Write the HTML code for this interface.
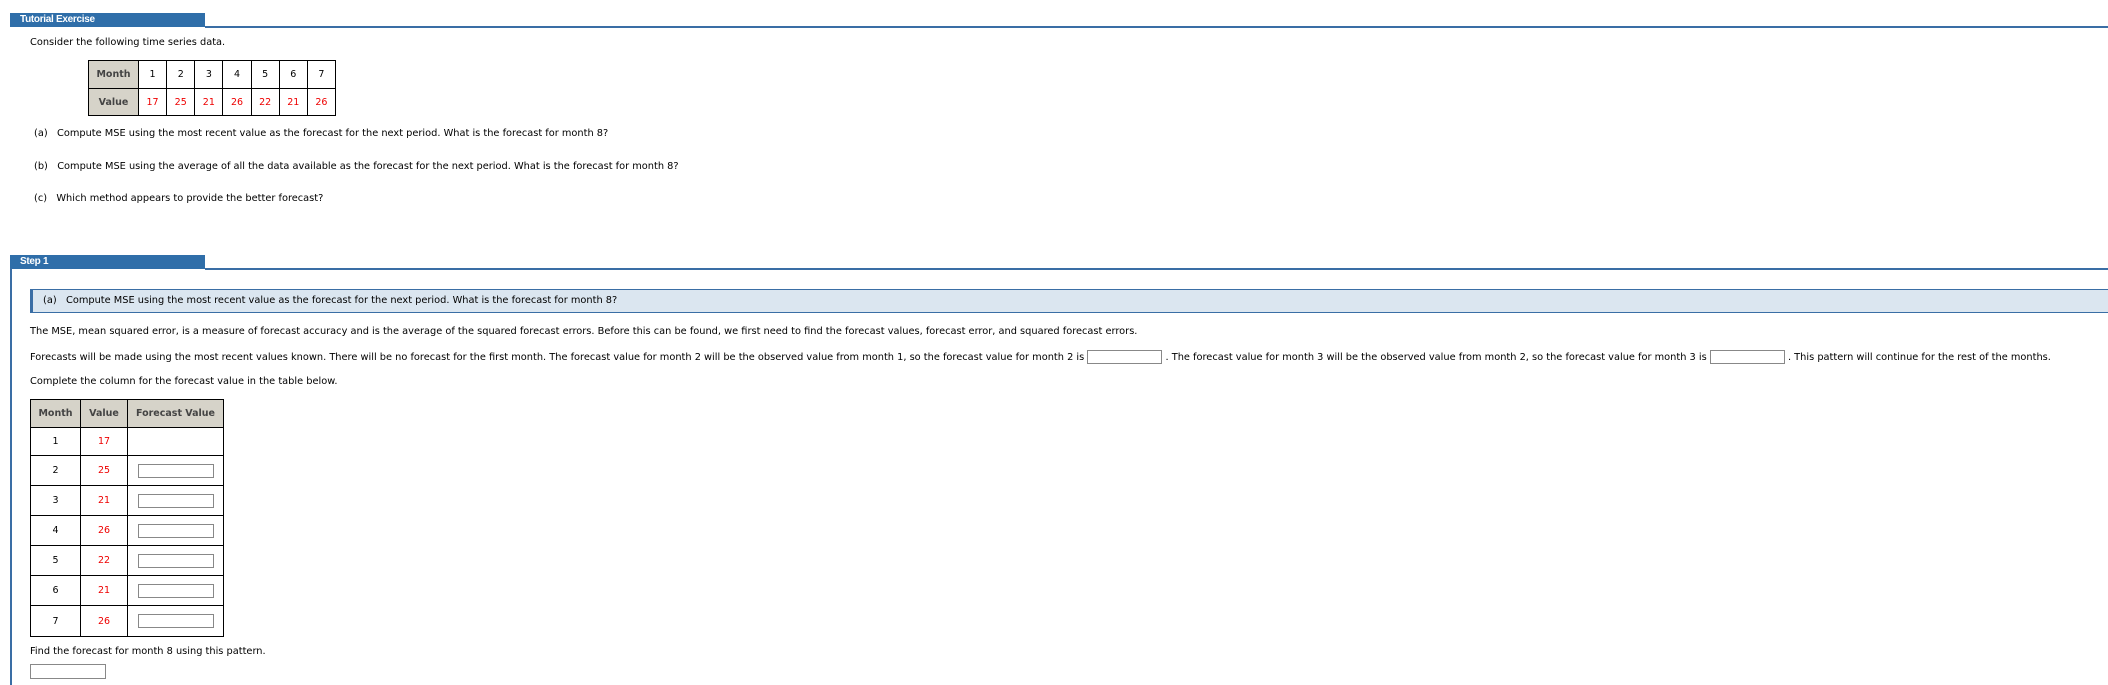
<!DOCTYPE html>
<html><head><meta charset="utf-8"><style>
*{margin:0;padding:0;box-sizing:border-box}
body{width:2108px;height:685px;background:#fff;position:relative;overflow:hidden;font-family:"DejaVu Sans","Liberation Sans",sans-serif;font-size:9.8px;color:#000}
.a{position:absolute;white-space:nowrap}
.bar{position:absolute;background:#2f6ea9;color:#fff;font-family:"Liberation Sans",sans-serif;font-weight:bold;font-size:10px;padding-left:10px;line-height:14px;letter-spacing:-0.3px}
.hl{position:absolute;height:2px;background:#3a6ea5}
table{position:absolute;border-collapse:collapse;font-size:9.5px}
td{border:1px solid #000;text-align:center;padding:0}
.h{background:#d6d3c9;color:#444;font-weight:bold}
.r{color:#e00}
.in{display:inline-block;border:1px solid #888;background:#fff;vertical-align:middle}
</style></head><body>
<div class="bar" style="left:10px;top:13px;width:195px;height:14px">Tutorial Exercise</div>
<div class="hl" style="left:205px;top:26px;width:1903px"></div>
<div class="a" style="left:30px;top:37px">Consider the following time series data.</div>
<table style="left:88px;top:60px;width:248px">
<tr style="height:28px"><td class="h" style="width:50px">Month</td><td>1</td><td>2</td><td>3</td><td>4</td><td>5</td><td>6</td><td>7</td></tr>
<tr style="height:27px"><td class="h">Value</td><td class="r">17</td><td class="r">25</td><td class="r">21</td><td class="r">26</td><td class="r">22</td><td class="r">21</td><td class="r">26</td></tr>
</table>
<div class="a" style="left:34px;top:128px">(a)&nbsp;&nbsp; Compute MSE using the most recent value as the forecast for the next period. What is the forecast for month 8?</div>
<div class="a" style="left:34px;top:161px">(b)&nbsp;&nbsp; Compute MSE using the average of all the data available as the forecast for the next period. What is the forecast for month 8?</div>
<div class="a" style="left:34px;top:193px">(c)&nbsp;&nbsp; Which method appears to provide the better forecast?</div>

<div class="bar" style="left:10px;top:255px;width:195px;height:14px">Step 1</div>
<div class="hl" style="left:205px;top:268px;width:1903px"></div>
<div style="position:absolute;left:10px;top:268px;width:2px;height:417px;background:#3a6ea5"></div>
<div style="position:absolute;left:30px;top:289px;width:2078px;height:24px;background:#dbe6f0;border-top:1px solid #3a6ea5;border-bottom:1px solid #3a6ea5;border-left:3px solid #3a6ea5"></div>
<div class="a" style="left:43px;top:295px">(a)&nbsp;&nbsp; Compute MSE using the most recent value as the forecast for the next period. What is the forecast for month 8?</div>
<div class="a" style="left:30px;top:326px">The MSE, mean squared error, is a measure of forecast accuracy and is the average of the squared forecast errors. Before this can be found, we first need to find the forecast values, forecast error, and squared forecast errors.</div>
<div class="a" style="left:30px;top:350px">Forecasts will be made using the most recent values known. There will be no forecast for the first month. The forecast value for month 2 will be the observed value from month 1, so the forecast value for month 2 is <span class="in" style="width:75px;height:14px"></span> . The forecast value for month 3 will be the observed value from month 2, so the forecast value for month 3 is <span class="in" style="width:75px;height:14px"></span> . This pattern will continue for the rest of the months.</div>
<div class="a" style="left:30px;top:376px">Complete the column for the forecast value in the table below.</div>
<table style="left:30px;top:399px;width:194px">
<tr style="height:28px"><td class="h" style="width:50px">Month</td><td class="h" style="width:47px">Value</td><td class="h">Forecast Value</td></tr>
<tr style="height:28px"><td>1</td><td class="r">17</td><td></td></tr>
<tr style="height:30px"><td>2</td><td class="r">25</td><td><span class="in" style="width:76px;height:14px"></span></td></tr>
<tr style="height:30px"><td>3</td><td class="r">21</td><td><span class="in" style="width:76px;height:14px"></span></td></tr>
<tr style="height:30px"><td>4</td><td class="r">26</td><td><span class="in" style="width:76px;height:14px"></span></td></tr>
<tr style="height:30px"><td>5</td><td class="r">22</td><td><span class="in" style="width:76px;height:14px"></span></td></tr>
<tr style="height:30px"><td>6</td><td class="r">21</td><td><span class="in" style="width:76px;height:14px"></span></td></tr>
<tr style="height:31px"><td>7</td><td class="r">26</td><td><span class="in" style="width:76px;height:14px"></span></td></tr>
</table>
<div class="a" style="left:30px;top:646px">Find the forecast for month 8 using this pattern.</div>
<span class="in" style="position:absolute;left:30px;top:664px;width:76px;height:15px"></span>
</body></html>
